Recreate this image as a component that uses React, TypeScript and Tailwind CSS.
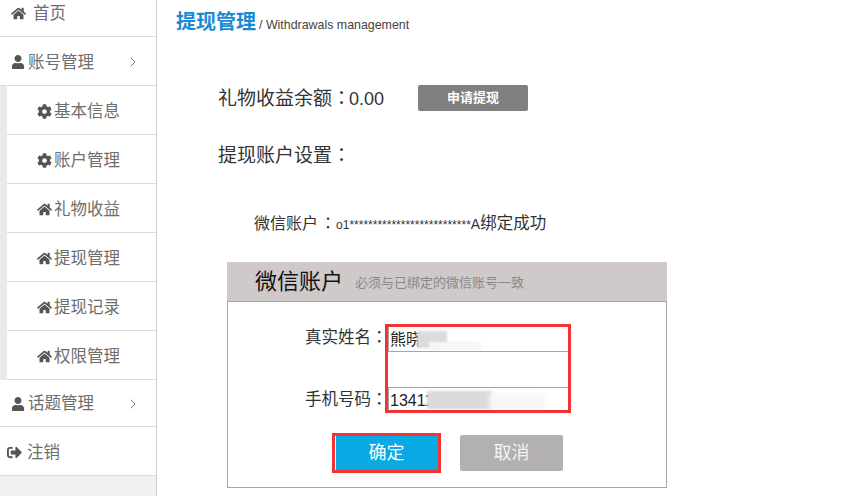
import React from "react";
import { FaHome, FaUser, FaCog, FaSignOutAlt } from "react-icons/fa";
import { LuChevronRight } from "react-icons/lu";

const font = { fontFamily: '"Liberation Sans", "Noto Sans CJK SC", sans-serif' };
const colonFont = { fontFamily: '"Noto Sans CJK TC", sans-serif' };

function Colon() {
  return <span style={colonFont}>：</span>;
}

function Row({ icon, label, chevron, className = "" }: { icon: React.ReactNode; label: string; chevron?: boolean; className?: string }) {
  return (
    <div className={"flex items-center border-b border-[#dcdcdc] bg-white text-[16.5px] text-[#6e6e6e] " + className}>
      {icon}
      <span>{label}</span>
      {chevron && <LuChevronRight className="ml-auto mr-[15px] text-[#777]" size={16} strokeWidth={1.5} />}
    </div>
  );
}

function SubRow({ icon, label }: { icon: React.ReactNode; label: string }) {
  return (
    <div className="flex h-[49px] items-center border-b border-[#dcdcdc] bg-white pl-[30px] pt-[2px] text-[16.5px] text-[#6e6e6e]">
      {icon}
      <span className="ml-[2px]">{label}</span>
    </div>
  );
}

export default function App() {
  const home = <FaHome size={15} className="text-[#555]" />;
  const cog = <FaCog size={15} className="text-[#555]" />;
  const user = <FaUser size={14} className="text-[#555]" />;
  return (
    <div className="flex h-[496px] w-[868px] overflow-hidden bg-white" style={font}>
      <aside className="flex w-[157px] shrink-0 flex-col border-r border-[#ccc] bg-[#f1f1f1]">
        <Row icon={<FaHome size={15} className="mr-[7px] text-[#555]" />} label="首页" className="h-[37px] pb-[9px] pl-[11px]" />
        <Row icon={<span className="mr-[3px]">{user}</span>} label="账号管理" chevron className="h-[49px] pl-[11px] pt-[2px]" />
        <div className="border-l-[7px] border-[#eaeaea]">
          <SubRow icon={cog} label="基本信息" />
          <SubRow icon={cog} label="账户管理" />
          <SubRow icon={home} label="礼物收益" />
          <SubRow icon={home} label="提现管理" />
          <SubRow icon={home} label="提现记录" />
          <SubRow icon={home} label="权限管理" />
        </div>
        <Row icon={<span className="mr-[3px]">{user}</span>} label="话题管理" chevron className="h-[47px] pl-[11px] pt-[1px]" />
        <Row icon={<FaSignOutAlt size={15} className="mr-[5px] text-[#555]" />} label="注销" className="h-[49px] pl-[7px] pt-[3px]" />
      </aside>

      <main className="flex-1 pl-[19px] text-[#333]">
        <div className="flex h-[44px] items-baseline pt-[7px]">
          <h1 className="text-[20px] font-bold text-[#1a8ad6]">提现管理</h1>
          <span className="ml-[3px] text-[12.4px] text-[#444]">/ Withdrawals management</span>
        </div>

        <div className="ml-[42px] mt-[41px] flex h-[26px] items-center text-[19px]">
          <span className="w-[200px] pt-[1px]">
            礼物收益余额<Colon /><span className="-ml-[2px] text-[18px]">0.00</span>
          </span>
          <button className="h-[26px] w-[110px] rounded-[2px] bg-[#808080] text-[13px] font-bold text-white">申请提现</button>
        </div>

        <div className="ml-[42px] mt-[30px] h-[26px] text-[19px] leading-[26px]">
          提现账户设置<Colon />
        </div>

        <div className="ml-[78px] mt-[42px] h-[26px] text-[16px] leading-[26px]">
          微信账户<span className="ml-[2px]"><Colon /></span>
          <span className="text-[12px]">o1**************************</span>
          <span className="text-[14px]">A</span>
          <span className="text-[16.5px]">绑定成功</span>
        </div>

        <section className="ml-[51px] mt-[27px] w-[440px]">
          <header className="flex h-[40px] items-center border-b border-[#aaa5a5] bg-[#cfc9c9] pl-[28px]">
            <span className="text-[22px] text-[#111]">微信账户</span>
            <span className="ml-[12px] pt-[2px] text-[13px] text-[#888]">必须与已绑定的微信账号一致</span>
          </header>
          <div className="h-[186px] border-x border-b border-[#aaa5a5] pt-[22px]">
            <div className="flex">
              <div className="flex w-[157px] flex-col gap-[37px] whitespace-nowrap pl-[77px] text-[16.5px] leading-[24px]">
                <div>
                  真实姓名<Colon />
                </div>
                <div>
                  手机号码<Colon />
                </div>
              </div>
              <div className="h-[89px] w-[186px] border-[3px] border-[#f33333]">
                <div className="relative h-[25px] overflow-hidden border-b border-l border-[#aaa5a5] pl-[1px] pt-[1px] text-[16px] leading-[24px] text-[#222]">
                  熊晓
                  <div className="absolute left-[28px] top-[4px] h-[17px] w-[30px] bg-[#dcdcdc] blur-[1px]" />
                  <div className="absolute left-[40px] top-[15px] h-[8px] w-[52px] bg-[#f6f6f6] blur-[1px]" />
                </div>
                <div className="h-[35px]" />
                <div className="relative h-[23px] overflow-hidden border-l border-t border-[#aaa5a5] pl-[1px] pt-[1px] text-[16px] leading-[24px] text-[#222]">
                  13411
                  <div className="absolute left-[38px] top-[3px] h-[18px] w-[65px] bg-[#dadada] blur-[1px]" />
                  <div className="absolute left-[100px] top-[6px] h-[15px] w-[56px] bg-[#f6f6f6] blur-[2px]" />
                </div>
              </div>
            </div>
            <div className="ml-[104px] mt-[20px] flex items-center">
              <button className="h-[40px] w-[109px] border-[3px] border-[#f33333] bg-[#09a9e3] pt-[1px] text-[18px] text-white shadow-[inset_1px_0_0_#fff]">确定</button>
              <button className="ml-[19px] h-[36px] w-[103px] rounded-[2px] bg-[#b3b0b0] pt-[1px] text-[18px] text-[#f2f2f2]">取消</button>
            </div>
          </div>
        </section>
      </main>
    </div>
  );
}
